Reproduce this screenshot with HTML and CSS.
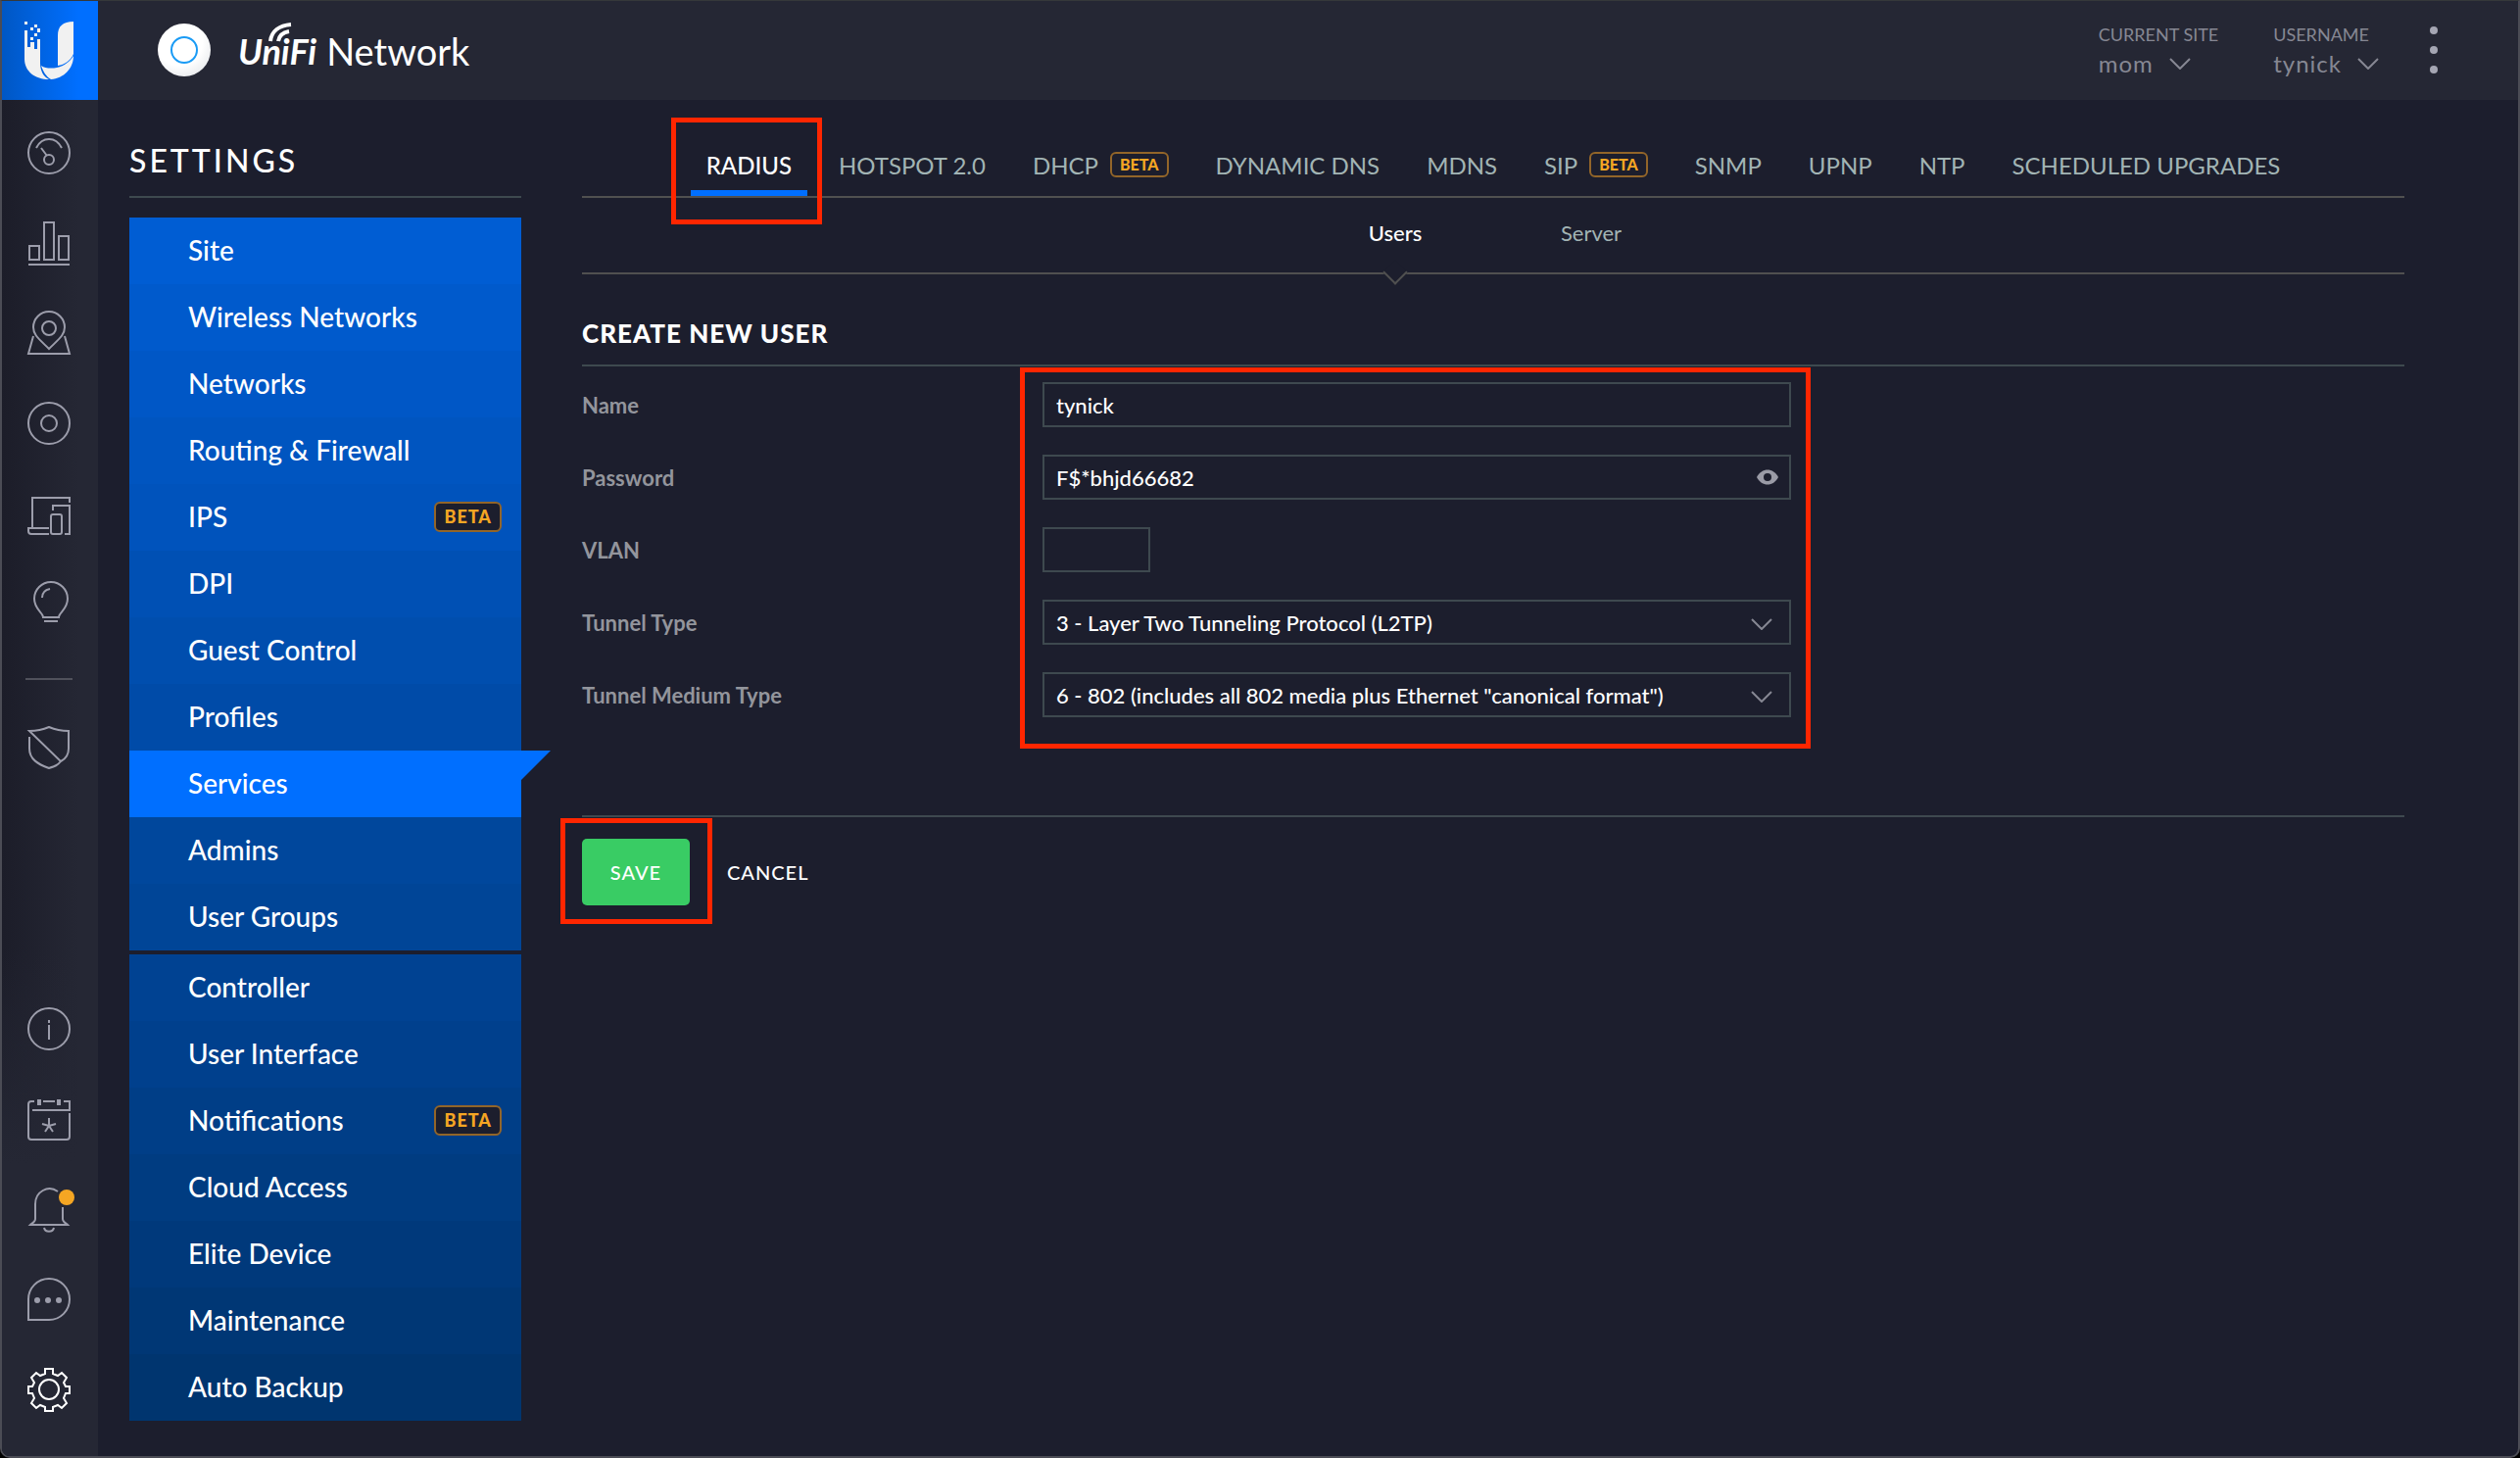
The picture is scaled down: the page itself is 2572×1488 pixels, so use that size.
FILE: index.html
```html
<!DOCTYPE html>
<html lang="en">

<head>
    <meta charset="UTF-8">
    <meta name="viewport" content="width=device-width, initial-scale=1.0">
    <title>UniFi Network</title>
    <link rel="stylesheet" href="styles.css">
</head>

<body>
    <div class="app">
        <nav class="rail" aria-label="Main">
            <a href="#" class="rail-logo" aria-label="Home">
                <svg width="56" height="62" viewBox="0 0 56 62" fill="#f1f1f1">
                    <rect x="2" y="1" width="3" height="3" />
                    <rect x="12" y="4" width="3" height="3" />
                    <rect x="8" y="7" width="3" height="3" />
                    <rect x="15" y="8" width="3" height="4" />
                    <rect x="12" y="13" width="3" height="3" />
                    <rect x="8" y="17" width="3" height="3" />
                    <path d="M2 10h3v17h3v-5h4v7h3v-10h3v24c0 8 3 14 9 17C13 60 2 52 2 39z" />
                    <path d="M52 1v33c-3 7-9 11-16 12V15c0-9 5-14 16-14z" />
                    <path d="M19 46c4 3 11 3 16 2 8-2 13-6 17-12 0 13-10 23-23 24-5-3-8-8-10-14z" />
                </svg>
            </a>
            <div class="rail-icons">
                <a href="#" aria-label="Dashboard"><svg viewBox="0 0 48 48"><circle cx="24" cy="24" r="21" /><circle cx="24" cy="31" r="5" /><path d="M22 27l-6-8M11 19c6-12 20-12 26 0" /></svg></a>
                <a href="#" aria-label="Statistics"><svg viewBox="0 0 48 48"><path d="M4 27h10v14H4zM19 3h10v38H19zM34 17h10v24H34zM3 46h42" /></svg></a>
                <a href="#" aria-label="Map"><svg viewBox="0 0 48 48"><circle cx="24" cy="19" r="7" /><path d="M24 40C14 30 8 26 8 18a16 16 0 0 1 32 0c0 8-6 12-16 22zM8 27L3 45h42l-5-18" /></svg></a>
                <a href="#" aria-label="Devices"><svg viewBox="0 0 48 48"><circle cx="24" cy="24" r="21" /><circle cx="24" cy="24" r="8" /></svg></a>
                <a href="#" aria-label="Clients"><svg viewBox="0 0 48 48"><path d="M45 13V8H7v31M24 39H3v3q0 3 3 3h18M28 21v-5h17v29h-5" /><rect x="26" y="25" width="11" height="20" rx="2" /></svg></a>
                <a href="#" aria-label="Insights"><svg viewBox="0 0 48 48"><path d="M18 38c0-5-9-8-9-19a17 17 0 0 1 34 0c0 11-9 14-9 19zM19 42h14M17 18c0-5 3-8 8-9" /></svg></a>
                <hr>
                <a href="#" aria-label="Security"><svg viewBox="0 0 48 48"><path d="M4 14v12c0 11 9 16 20 20 6-2 9-3 12-7L4 8c8 0 13-1 20-4 7 3 13 4 20 4v18c0 5-2 10-8 13" /></svg></a>
            </div>
            <div class="rail-icons rail-bottom">
                <a href="#" aria-label="Information"><svg viewBox="0 0 48 48"><circle cx="24" cy="24" r="21" /><path d="M24 20v15M24 15v3" /></svg></a>
                <a href="#" aria-label="Events"><svg viewBox="0 0 48 48"><path d="M9 6H6q-3 0-3 3v33q0 3 3 3h36q3 0 3-3V18M18 6h12M39 6h6v9H7M24 31v-8M24 31l-7-2M24 31l7-2M24 31l-4 6M24 31l4 6" /><path class="thick" d="M14 4v6M34 4v6" /></svg></a>
                <a href="#" aria-label="Alerts"><svg viewBox="0 0 48 48"><path d="M33 6c-10-7-23 0-23 13v15c0 3-4 5-5 6h38c-1-1-5-3-5-6V22M19 43c1 5 9 5 10 0" /></svg><span class="alert-dot"></span></a>
                <a href="#" aria-label="Chat"><svg viewBox="0 0 48 48"><path d="M3 45V24a21 21 0 1 1 21 21z" /><g class="dots"><circle cx="12" cy="25" r="3" /><circle cx="23" cy="25" r="3" /><circle cx="34" cy="25" r="3" /></g></svg></a>
                <a href="#" class="active" aria-label="Settings"><svg viewBox="0 0 48 48"><path d="M20 3h8v5l5 2 4-3 5 5-3 5 2 4h4v7h-4l-2 5 3 5-5 5-4-3-5 2v4h-8v-4l-5-2-4 3-5-5 3-5-2-5H3v-7h4l2-4-3-5 5-5 4 3 5-2z" /><circle cx="24" cy="24" r="10" /></svg></a>
            </div>
        </nav>

        <div class="page">
            <header class="topbar">
                <div class="brand">
                    <span class="ap"></span>
                    <span class="unifi">UniFi
                        <svg width="26" height="22" viewBox="0 0 26 22"><path d="M3 19C4 9 12 3 24 2M11 19c1-6 5-9 11-10" /></svg>
                    </span>
                    <span class="product">Network</span>
                </div>
                <div class="account">
                    <button class="picker">
                        <small>CURRENT SITE</small>
                        <span>mom <svg class="chevron" viewBox="0 0 22 12"><path d="M1 1l10 10L21 1" /></svg></span>
                    </button>
                    <button class="picker">
                        <small>USERNAME</small>
                        <span>tynick <svg class="chevron" viewBox="0 0 22 12"><path d="M1 1l10 10L21 1" /></svg></span>
                    </button>
                    <button class="more" aria-label="More"><i></i><i></i><i></i></button>
                </div>
            </header>

            <div class="content">
                <aside class="settings">
                    <h1>SETTINGS</h1>
                    <nav class="menu" aria-label="Settings">
                        <a href="#">Site</a>
                        <a href="#">Wireless Networks</a>
                        <a href="#">Networks</a>
                        <a href="#">Routing &amp; Firewall</a>
                        <a href="#">IPS <span class="beta">BETA</span></a>
                        <a href="#">DPI</a>
                        <a href="#">Guest Control</a>
                        <a href="#">Profiles</a>
                        <a href="#" class="current">Services</a>
                        <a href="#">Admins</a>
                        <a href="#">User Groups</a>
                    </nav>
                    <nav class="menu menu-controller" aria-label="Controller">
                        <a href="#">Controller</a>
                        <a href="#">User Interface</a>
                        <a href="#">Notifications <span class="beta">BETA</span></a>
                        <a href="#">Cloud Access</a>
                        <a href="#">Elite Device</a>
                        <a href="#">Maintenance</a>
                        <a href="#">Auto Backup</a>
                    </nav>
                </aside>

                <main class="main">
                    <nav class="tabs" aria-label="Services">
                        <a href="#" class="current highlight">RADIUS</a>
                        <a href="#">HOTSPOT 2.0</a>
                        <a href="#">DHCP <span class="beta">BETA</span></a>
                        <a href="#">DYNAMIC DNS</a>
                        <a href="#">MDNS</a>
                        <a href="#">SIP <span class="beta">BETA</span></a>
                        <a href="#">SNMP</a>
                        <a href="#">UPNP</a>
                        <a href="#">NTP</a>
                        <a href="#">SCHEDULED UPGRADES</a>
                    </nav>
                    <nav class="subtabs" aria-label="RADIUS">
                        <a href="#" class="current">Users</a>
                        <a href="#">Server</a>
                    </nav>

                    <form>
                        <h2>CREATE NEW USER</h2>
                        <div class="form-body">
                            <div class="labels">
                                <label for="name">Name</label>
                                <label for="password">Password</label>
                                <label for="vlan">VLAN</label>
                                <label for="tunnel-type">Tunnel Type</label>
                                <label for="tunnel-medium">Tunnel Medium Type</label>
                            </div>
                            <div class="fields highlight">
                                <input type="text" id="name" value="tynick">
                                <div class="control">
                                    <input type="text" id="password" value="F$*bhjd66682">
                                    <button type="button" class="eye" aria-label="Hide password"><svg viewBox="0 0 22 16"><path d="M0 8C5-2 17-2 22 8 17 18 5 18 0 8z" /><circle cx="11" cy="8" r="4" /></svg></button>
                                </div>
                                <input type="text" id="vlan" class="short">
                                <div class="control">
                                    <select id="tunnel-type">
                                        <option>3 - Layer Two Tunneling Protocol (L2TP)</option>
                                    </select>
                                    <svg class="chevron" viewBox="0 0 22 12"><path d="M1 1l10 10L21 1" /></svg>
                                </div>
                                <div class="control">
                                    <select id="tunnel-medium">
                                        <option>6 - 802 (includes all 802 media plus Ethernet "canonical format")</option>
                                    </select>
                                    <svg class="chevron" viewBox="0 0 22 12"><path d="M1 1l10 10L21 1" /></svg>
                                </div>
                            </div>
                        </div>
                        <div class="actions">
                            <span class="highlight"><button type="submit" class="save">SAVE</button></span>
                            <button type="button" class="cancel">CANCEL</button>
                        </div>
                    </form>
                </main>
            </div>
        </div>
    </div>
</body>

</html>
```

FILE: styles.css
```css
:root {
    --bg: #1c1e2d;
    --bar: #252734;
    --line: #3e494f;
    --tab-line: #505050;
    --blue: #006fff;
    --orange: #f5a623;
    --muted: #a2b4b4;
    --icon: #9c9dab;
    --mark: #ff2600;
}

* {
    box-sizing: border-box;
}

body {
    margin: 0;
    background: #000;
    color: #fff;
    font-family: Lato, sans-serif;
    font-size: 22px;
}

a {
    color: inherit;
    text-decoration: none;
}

button {
    padding: 0;
    border: none;
    background: none;
    color: inherit;
    font-family: inherit;
    cursor: pointer;
}

.app {
    display: flex;
    min-height: 100vh;
    background: var(--bg);
    border: 2px solid #4b4c55;
    border-top: 1px solid #35383a;
    border-radius: 0 0 10px 10px;
    overflow: hidden;
}

/* left icon rail */
.rail {
    width: 98px;
    flex-shrink: 0;
    display: flex;
    flex-direction: column;
    background:
        linear-gradient(to bottom, transparent 65%, var(--bar) 80%),
        linear-gradient(to right, #1c1d29, var(--bar) 80%);
}

.rail-logo {
    height: 101px;
    display: flex;
    align-items: center;
    justify-content: center;
    background: linear-gradient(to right, #0057c4, var(--blue) 80%);
}

.rail-icons {
    display: flex;
    flex-direction: column;
    align-items: center;
    gap: 44px;
    padding: 30px 2px 0 0;
}

.rail-icons a {
    position: relative;
    height: 48px;
}

.rail-icons svg {
    display: block;
    width: 48px;
    height: 48px;
    fill: none;
    stroke: var(--icon);
    stroke-width: 2;
}

.rail-icons .thick {
    stroke-width: 4;
}

.rail-icons .dots {
    fill: var(--icon);
    stroke: none;
}

.rail-icons .active svg {
    stroke: #fff;
}

.rail-icons hr {
    width: 48px;
    margin: 8px 0 0;
    border: none;
    border-top: 2px solid #50515b;
}

.rail-bottom {
    margin-top: auto;
    padding-bottom: 44px;
}

.alert-dot {
    position: absolute;
    top: 4px;
    right: -2px;
    width: 16px;
    height: 16px;
    border-radius: 50%;
    background: var(--orange);
}

.page {
    flex: 1;
    min-width: 0;
}

/* top bar */
.topbar {
    height: 101px;
    display: flex;
    justify-content: space-between;
    align-items: center;
    padding: 0 82px 2px 61px;
    background: var(--bar);
}

.brand {
    display: flex;
    align-items: center;
}

.ap {
    width: 54px;
    height: 54px;
    display: flex;
    align-items: center;
    justify-content: center;
    border-radius: 50%;
    background: radial-gradient(circle at 40% 35%, #fff 50%, #dcdfe3);
}

.ap::before {
    content: "";
    width: 24px;
    height: 24px;
    border: 2px solid #1a9bf5;
    border-radius: 50%;
}

.unifi,
.product {
    padding-top: 2px;
    line-height: 48px;
}

.unifi {
    position: relative;
    margin-left: 28px;
    font-size: 36px;
    font-style: italic;
    font-weight: bold;
}

.unifi svg {
    position: absolute;
    left: 30px;
    top: -3px;
    fill: none;
    stroke: #fff;
    stroke-width: 4;
}

.product {
    margin-left: 10px;
    font-size: 38px;
}

.account {
    display: flex;
    align-items: center;
    color: #868793;
}

.picker {
    display: flex;
    flex-direction: column;
    align-items: flex-start;
    margin-right: 52px;
}

.picker + .picker {
    margin-left: 4px;
}

.picker small {
    font-size: 18px;
    line-height: 28px;
}

.picker span {
    display: flex;
    align-items: center;
    gap: 16px;
    font-size: 24px;
    line-height: 32px;
    letter-spacing: 1px;
}

.chevron {
    width: 22px;
    height: 12px;
    fill: none;
    stroke: #868793;
    stroke-width: 2;
}

.more {
    display: flex;
    flex-direction: column;
    justify-content: space-between;
    height: 48px;
}

.more i {
    width: 8px;
    height: 8px;
    border-radius: 50%;
    background: #a5a6b3;
}

.content {
    display: flex;
    padding: 0 116px 36px 32px;
}

/* settings menu */
.settings {
    width: 400px;
    flex-shrink: 0;
}

h1 {
    height: 100px;
    margin: 0 0 20px;
    padding-top: 42px;
    border-bottom: 2px solid var(--line);
    font-size: 32px;
    font-weight: 500;
    line-height: 40px;
    letter-spacing: 3px;
}

.menu a {
    position: relative;
    height: 68px;
    display: flex;
    align-items: center;
    justify-content: space-between;
    padding: 0 20px 2px 60px;
    font-size: 28px;
    font-weight: 500;
}

.menu a:nth-child(1) { background: #005dd3; }
.menu a:nth-child(2) { background: #005acc; }
.menu a:nth-child(3) { background: #0057c6; }
.menu a:nth-child(4) { background: #0055c0; }
.menu a:nth-child(5) { background: #0053bc; }
.menu a:nth-child(6) { background: #0050b4; }
.menu a:nth-child(7) { background: #004eae; }
.menu a:nth-child(8) { background: #004ba8; }
.menu a:nth-child(10) { background: #00479c; }
.menu a:nth-child(11) { background: #004597; }

.menu a.current {
    background: var(--blue);
}

.menu .current::after {
    content: "";
    position: absolute;
    left: 100%;
    top: 0;
    border-top: 30px solid var(--blue);
    border-right: 30px solid transparent;
}

.menu-controller {
    margin-top: 4px;
}

.menu-controller a:nth-child(1) { background: #004292; }
.menu-controller a:nth-child(2) { background: #00408d; }
.menu-controller a:nth-child(3) { background: #003e87; }
.menu-controller a:nth-child(4) { background: #003c81; }
.menu-controller a:nth-child(5) { background: #00397b; }
.menu-controller a:nth-child(6) { background: #003775; }
.menu-controller a:nth-child(7) { background: #00356f; }

.beta {
    padding: 0 8px;
    border: 2px solid #926529;
    border-radius: 6px;
    background: var(--bg);
    color: var(--orange);
    font-size: 18px;
    font-weight: 900;
    line-height: 27px;
    letter-spacing: 1px;
}

/* main column */
.main {
    flex: 1;
    min-width: 0;
    margin-left: 62px;
}

.tabs {
    height: 100px;
    display: flex;
    justify-content: center;
    border-bottom: 2px solid var(--tab-line);
    color: var(--muted);
    font-size: 24px;
    white-space: nowrap;
}

.tabs a {
    position: relative;
    display: flex;
    align-items: center;
    gap: 12px;
    margin: 0 8px;
    padding: 34px 16px 0;
}

.tabs .current {
    border-bottom: 6px solid var(--blue);
    padding-top: 40px;
    color: #fff;
    font-weight: 500;
}

.tabs .beta {
    font-size: 16px;
    line-height: 22px;
    letter-spacing: 0;
}

/* red frames round the parts to fill in */
.highlight {
    position: relative;
}

.highlight::before {
    content: "";
    position: absolute;
    border: 5px solid var(--mark);
    pointer-events: none;
}

.tabs .highlight::before {
    inset: 18px -15px -35px -20px;
}

.subtabs {
    height: 78px;
    display: flex;
    justify-content: center;
    border-bottom: 2px solid var(--tab-line);
    color: var(--muted);
}

.subtabs a {
    position: relative;
    width: 200px;
    padding-top: 20px;
    line-height: 32px;
    text-align: center;
}

.subtabs .current {
    color: #fff;
    font-weight: 500;
}

.subtabs .current::after {
    content: "";
    position: absolute;
    left: 91px;
    bottom: -9px;
    width: 16px;
    height: 16px;
    border: solid var(--tab-line);
    border-width: 0 2px 2px 0;
    background: var(--bg);
    transform: rotate(45deg);
}

h2 {
    margin: 0;
    padding: 44px 0 16px;
    border-bottom: 2px solid var(--line);
    font-size: 26px;
    font-weight: 900;
    line-height: 32px;
    letter-spacing: 1px;
}

.form-body {
    display: flex;
    padding: 16px 0 98px;
    border-bottom: 2px solid var(--line);
}

.labels {
    width: 470px;
    flex-shrink: 0;
    display: grid;
    gap: 26px;
    color: #93959c;
    font-weight: bold;
    line-height: 48px;
}

.fields {
    flex: 0 1 764px;
    display: grid;
    align-content: start;
    gap: 28px;
}

.fields.highlight::before {
    inset: -15px -20px -30px -23px;
}

.control {
    position: relative;
}

input,
select {
    display: block;
    width: 100%;
    height: 46px;
    margin: 0;
    padding: 0 12px;
    border: 2px solid var(--line);
    border-radius: 0;
    background: var(--bg);
    color: #fff;
    font-family: inherit;
    font-size: 22px;
    font-weight: 500;
    appearance: none;
}

.short {
    width: 110px;
}

.control .chevron {
    position: absolute;
    right: 19px;
    top: 19px;
    pointer-events: none;
}

.eye {
    position: absolute;
    right: 13px;
    top: 15px;
    height: 16px;
}

.eye svg {
    display: block;
    width: 22px;
    height: 16px;
    fill: #9a9ba6;
}

.eye circle {
    fill: var(--bg);
}

.actions {
    display: flex;
    align-items: center;
    gap: 38px;
    padding-top: 22px;
}

.actions .highlight::before {
    inset: -21px -23px -19px -22px;
}

.save,
.cancel {
    height: 68px;
    font-size: 20px;
    font-weight: 500;
    letter-spacing: 1px;
}

.save {
    display: block;
    width: 110px;
    border-radius: 5px;
    background: #39cc64;
}
```
